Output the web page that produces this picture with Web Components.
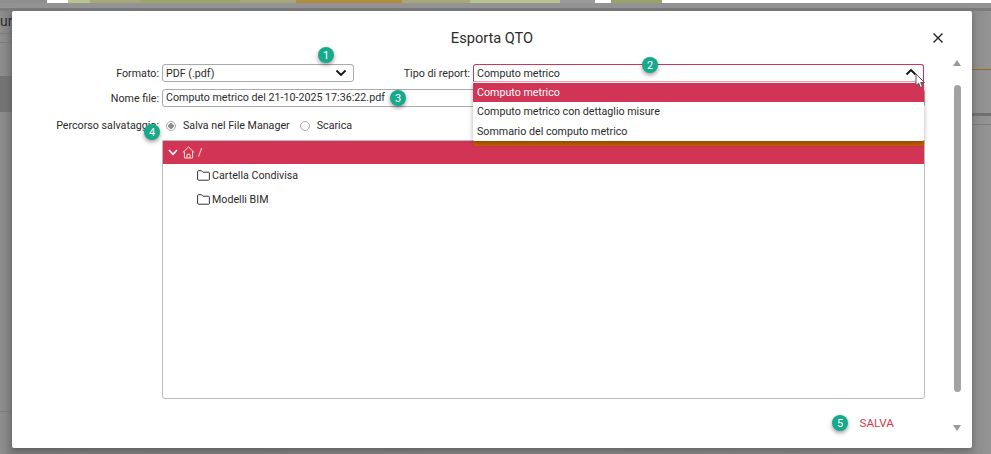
<!DOCTYPE html>
<html lang="it">
<head>
<meta charset="utf-8">
<title>Esporta QTO</title>
<style>
	html, body { margin: 0; height: 100%; }
	body { font-family: Roboto, "Liberation Sans", sans-serif; color: #2b2b2b; overflow: hidden; background: #8b8b8b; }
</style>
</head>
<body>
<app-backdrop>
	<qto-dialog heading="Esporta QTO">
		<form-row label="Formato:" label-width="148">
			<qto-select value="PDF (.pdf)" width="192"><num-badge style="left:156px;top:-17px">1</num-badge></qto-select>
			<form-row nested label="Tipo di report:" label-width="117">
				<qto-select value="Computo metrico" width="451" open>
					<num-badge style="left:169px;top:-7px">2</num-badge>
				</qto-select>
			</form-row>
		</form-row>
		<form-row label="Nome file:" label-width="148">
			<qto-input value="Computo metrico del 21-10-2025 17:36:22.pdf" width="763"><num-badge style="left:228px;top:1px">3</num-badge></qto-input>
		</form-row>
		<form-row radios label="Percorso salvataggio:" label-width="148">
			<radio-option checked>Salva nel File Manager</radio-option>
			<radio-option>Scarica</radio-option>
			<num-badge style="left:132px;top:10px">4</num-badge>
		</form-row>
		<folder-tree>
			<folder-item>Cartella Condivisa</folder-item>
			<folder-item>Modelli BIM</folder-item>
		</folder-tree>
		<save-bar></save-bar>
	</qto-dialog>
</app-backdrop>

<script>
class AppBackdrop extends HTMLElement {
	constructor(){
		super();
		this.attachShadow({mode:"open"});
		this.shadowRoot.innerHTML = `
			<style>
				:host {
					display: flex;
					box-sizing: border-box;
					height: 454px;
					padding: 11px 19px 6px 12px;
					position: relative;
					background: linear-gradient(90deg,#8f8f8f 0,#7e7e7e 12px,#8a8a8a 972px,#959595 991px);
				}
				.map {
					position: absolute;
					left: 0; top: 0; right: 0;
					height: 3px;
					background: linear-gradient(90deg,#8f8f8f 0 47px,#fff 47px 68px,#b9c291 68px 90px,#a8a67f 90px 140px,#9ba66c 140px 240px,#a8a67f 240px 296px,#b08d3e 296px 402px,#a8a67f 402px 470px,#b9c291 470px 560px,#9a9a9a 560px 595px,#fff 595px 611px,#98a36b 611px 662px,#fff 662px);
				}
				.band {
					position: absolute;
					left: 0; right: 0;
					top: 3px;
					height: 8px;
					background: linear-gradient(#939393 0 5px,#7b7b7b 5px);
				}
				.word {
					position: absolute;
					left: 0; top: 13px;
					font: 14px Roboto, sans-serif;
					color: #2d2d2d;
				}
				.shade { position: absolute; left: 0; width: 12px; top: 76px; height: 36px; background: #737373; }
				.rule-l { position: absolute; left: 0; width: 12px; top: 33px; height: 1px; background: #7a7a7a; }
				.rule-l2 { position: absolute; left: 0; width: 12px; top: 42px; height: 1px; background: #7a7a7a; }
				.rule-l3 { position: absolute; left: 0; width: 12px; top: 411px; height: 1px; background: #7a7a7a; }
				.orange { position: absolute; left: 972px; right: 0; top: 69px; height: 1px; background: #a0651f; }
				.dark { position: absolute; left: 972px; right: 0; top: 113px; height: 3px; background: #6f6f6f; }
				.rule-r { position: absolute; left: 972px; right: 0; top: 124px; height: 1px; background: #7b7b7b; }
				::slotted(*) { position: relative; z-index: 1; }
			</style>
			<div class="map"></div>
			<div class="band"></div>
			<div class="word">ur</div>
			<div class="shade"></div>
			<div class="rule-l"></div><div class="rule-l2"></div><div class="rule-l3"></div>
			<div class="orange"></div><div class="dark"></div><div class="rule-r"></div>
			<slot></slot>
		`;
	}
}
customElements.define("app-backdrop",AppBackdrop);

class QtoDialog extends HTMLElement {
	constructor(){
		super();
		this.attachShadow({mode:"open"});
		this.shadowRoot.innerHTML = `
			<style>
				:host {
					display: flex;
					flex-direction: column;
					width: 960px;
					height: 437px;
					background: #fff;
					border-radius: 2px;
					box-shadow: 0 3px 6px #00000040;
				}
				header {
					display: flex;
					align-items: center;
					justify-content: center;
					height: 53px;
					flex: none;
					position: relative;
					font-size: 14.6px;
					color: #2b2b2b;
					box-sizing: border-box;
				}
				header svg { position: absolute; left: 920px; top: 21px; }
				.body { flex: 1; display: flex; min-height: 0; }
				.main { width: 934px; flex: none; display: flex; flex-direction: column; }
				.track { flex: none; display: flex; flex-direction: column; align-items: center; padding: 0 0 17px; width: 22px; box-sizing: border-box; }
				.up { margin-top: -4px; width: 0; height: 0; border: 4px solid transparent; border-top: 0; border-bottom: 6px solid #9a9a9a; }
				.thumb { width: 7px; height: 307px; margin-top: 19px; background: #a3a3a3; border-radius: 4px; }
				.down { margin-top: auto; width: 0; height: 0; border: 4px solid transparent; border-bottom: 0; border-top: 6px solid #9a9a9a; }
			</style>
			<header>
				<span id="title"></span>
				<svg width="12" height="12" viewBox="0 0 12 12"><path d="M1.5 1.5 10.5 10.5M10.5 1.5 1.5 10.5" stroke="#222" stroke-width="1.4" fill="none"/></svg>
			</header>
			<div class="body">
				<div class="main"><slot></slot></div>
				<div class="track"><div class="up"></div><div class="thumb"></div><div class="down"></div></div>
			</div>
		`;
		this.shadowRoot.getElementById("title").textContent = this.getAttribute("heading");
	}
}
customElements.define("qto-dialog",QtoDialog);

class FormRow extends HTMLElement {
	constructor(){
		super();
		this.attachShadow({mode:"open"});
		this.shadowRoot.innerHTML = `
			<style>
				:host {
					display: flex;
					align-items: center;
					position: relative;
					font-size: 10.7px;
					color: #2b2b2b;
					margin-bottom: 7px;
				}
				:host([nested]) { margin-bottom: 0; }
				:host([radios]) { margin-bottom: 3px; height: 23px; }
				label { text-align: right; flex: none; padding-right: 3px; box-sizing: border-box; white-space: nowrap; }
				.fields { display: flex; align-items: center; }
			</style>
			<label></label>
			<div class="fields"><slot></slot></div>
		`;
		let l = this.shadowRoot.querySelector("label");
		l.textContent = this.getAttribute("label");
		l.style.width = (Number(this.getAttribute("label-width"))+2)+"px";
	}
}
customElements.define("form-row",FormRow);

class QtoSelect extends HTMLElement {
	constructor(){
		super();
		this.attachShadow({mode:"open"});
		let open = this.hasAttribute("open");
		this.shadowRoot.innerHTML = `
			<style>
				:host { display: block; position: relative; }
				.box {
					display: flex;
					align-items: center;
					justify-content: space-between;
					box-sizing: border-box;
					height: 18px;
					padding: 0 4px 0 3px;
					border: 1px solid #aaa;
					border-radius: 3px;
					font-size: 10.7px;
					color: #2b2b2b;
				}
				.box.open { border: 1.5px solid #d13455; border-bottom-color: #e9a9b7; border-radius: 3px 3px 0 0; }
				.box.open svg { transform: translateY(-1px); }
				svg { margin-right: 2px; }
				.menu {
					position: absolute;
					left: 0; right: 0; top: 19px;
					z-index: 3;
					background: #fff;
					box-shadow: 0 2px 5px #00000050;
					border-radius: 0 0 2px 2px;
				}
				.menu div { height: 19.3px; line-height: 20.3px; padding: 0 4px; font-size: 10.7px; color: #2b2b2b; }
				.menu div:last-child { line-height: 19.3px; }
				.menu .on { background: #d13455; color: #fff; }
				.lip {
					position: absolute;
					left: 0; right: 0; top: 77px;
					height: 5px;
					z-index: 2;
					background: #c46200;
					border-radius: 0 0 3px 3px;
				}
				.cursor { position: absolute; right: -2px; top: 9px; z-index: 4; margin: 0; }
				::slotted(num-badge) { z-index: 5; }
			</style>
			<div class="box ${open?"open":""}">
				<span id="value"></span>
				<svg width="12" height="8" viewBox="0 0 12 8"><path d="${open?"M1.5 6.5 6 2 10.5 6.5":"M1.5 1.5 6 6 10.5 1.5"}" stroke="#111" stroke-width="1.8" fill="none"/></svg>
			</div>
			${open?`
			<div class="lip"></div>
			<div class="menu">
				<div class="on">Computo metrico</div>
				<div>Computo metrico con dettaglio misure</div>
				<div>Sommario del computo metrico</div>
			</div>
			<svg class="cursor" width="11" height="16" viewBox="0 0 11 16"><path d="M1 1V12.5L3.6 10.2 5.4 14.5 7.5 13.6 5.7 9.5H9.4Z" fill="#fff" stroke="#555" stroke-width="1"/></svg>
			`:""}
			<slot></slot>
		`;
		this.style.width = this.getAttribute("width")+"px";
		this.shadowRoot.getElementById("value").textContent = this.getAttribute("value");
	}
}
customElements.define("qto-select",QtoSelect);

class QtoInput extends HTMLElement {
	constructor(){
		super();
		this.attachShadow({mode:"open"});
		this.shadowRoot.innerHTML = `
			<style>
				:host { display: block; position: relative; }
				.box {
					box-sizing: border-box;
					height: 18px;
					line-height: 16px;
					padding: 0 3px;
					border: 1px solid #aaa;
					border-radius: 3px;
					font-size: 10.7px;
					color: #2b2b2b;
				}
			</style>
			<div class="box" id="value"></div>
			<slot></slot>
		`;
		this.style.width = this.getAttribute("width")+"px";
		this.shadowRoot.getElementById("value").textContent = this.getAttribute("value");
	}
}
customElements.define("qto-input",QtoInput);

class RadioOption extends HTMLElement {
	constructor(){
		super();
		this.attachShadow({mode:"open"});
		this.shadowRoot.innerHTML = `
			<style>
				:host {
					display: inline-flex;
					align-items: center;
					gap: 7px;
					margin-left: 4px;
					margin-right: 6px;
					font-size: 10.7px;
					color: #2b2b2b;
				}
				i {
					display: block;
					box-sizing: border-box;
					width: 10px; height: 10px;
					border-radius: 50%;
					border: 1px solid #aaa;
				}
				:host([checked]) i { background: radial-gradient(circle,#8f8f8f 0 2.6px,#fff 3px); }
			</style>
			<i></i><slot></slot>
		`;
	}
}
customElements.define("radio-option",RadioOption);

class FolderTree extends HTMLElement {
	constructor(){
		super();
		this.attachShadow({mode:"open"});
		this.shadowRoot.innerHTML = `
			<style>
				:host {
					display: block;
					box-sizing: border-box;
					margin-left: 150px;
					width: 763px;
					height: 259px;
					border: 1px solid #bbb;
					border-radius: 0 0 3px 3px;
				}
				.root {
					display: flex;
					align-items: center;
					gap: 4px;
					height: 23px;
					padding-left: 5px;
					background: #d13455;
					color: #ffe9c8;
					font-size: 10.7px;
				}
				.items { padding: 0 0 0 34px; }
			</style>
			<div class="root">
				<svg width="10" height="7" viewBox="0 0 10 7"><path d="M1 1 5 5.3 9 1" stroke="#fff" stroke-width="1.6" fill="none"/></svg>
				<svg width="13" height="13" viewBox="0 0 13 13"><path d="M.8 6.5 6.5 1l5.7 5.500M2.400 5.400V12h8.200V5.400M5 12V8.300h3V12" stroke="#ffe4c8" stroke-width="1" fill="none"/></svg>
				<span style="margin-left:-1px">/</span>
			</div>
			<div class="items"><slot></slot></div>
		`;
	}
}
customElements.define("folder-tree",FolderTree);

class FolderItem extends HTMLElement {
	constructor(){
		super();
		this.attachShadow({mode:"open"});
		this.shadowRoot.innerHTML = `
			<style>
				:host {
					display: flex;
					align-items: center;
					gap: 2px;
					height: 23.5px;
					font-size: 10.7px;
					color: #2b2b2b;
				}
			</style>
			<svg width="13" height="11" viewBox="0 0 13 11"><path d="M.6 9.200V1.600Q.6.700 1.500.700H4.500L5.800 2.200H11.500Q12.400 2.200 12.400 3.100V9.300Q12.400 10.200 11.500 10.200H1.600Q.6 10.200.6 9.200Z" stroke="#333" stroke-width="1" fill="none"/></svg>
			<slot></slot>
		`;
	}
}
customElements.define("folder-item",FolderItem);

class SaveBar extends HTMLElement {
	constructor(){
		super();
		this.attachShadow({mode:"open"});
		this.shadowRoot.innerHTML = `
			<style>
				:host {
					display: flex;
					justify-content: flex-end;
					align-items: center;
					position: relative;
					height: 24px;
					margin-top: 12px;
					padding-right: 52px;
					font-size: 11.7px;
					color: #d9394f;
				}
				num-badge { left: 820px; top: 4px; }
			</style>
			<num-badge>5</num-badge>
			<span>SALVA</span>
		`;
	}
}
customElements.define("save-bar",SaveBar);

class NumBadge extends HTMLElement {
	constructor(){
		super();
		this.attachShadow({mode:"open"});
		this.shadowRoot.innerHTML = `
			<style>
				:host {
					display: flex;
					align-items: center;
					justify-content: center;
					position: absolute;
					z-index: 6;
					width: 16px;
					height: 16px;
					border-radius: 50%;
					background: #17a98c;
					color: #fff;
					font-size: 11px;
					box-shadow: 0 2px 4px #00000066;
				}
			</style>
			<slot></slot>
		`;
	}
}
customElements.define("num-badge",NumBadge);
</script>
</body>
</html>
